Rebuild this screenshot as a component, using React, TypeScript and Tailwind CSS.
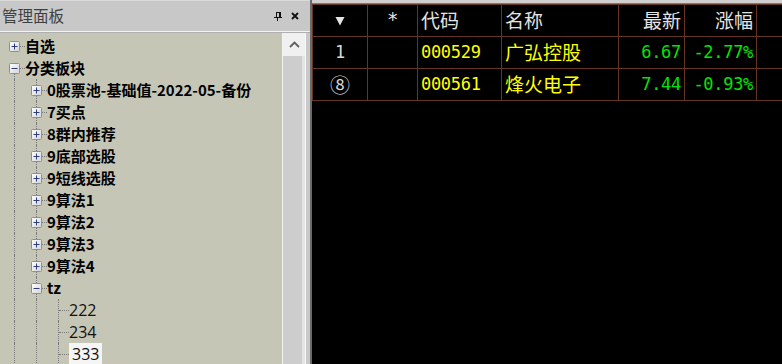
import React from "react";

type Row = { lvl: number; t: string; box?: "+" | "-"; sel?: boolean };

const rows: Row[] = [
  { lvl: 0, t: "自选", box: "+" },
  { lvl: 0, t: "分类板块", box: "-" },
  { lvl: 1, t: "0股票池-基础值-2022-05-备份", box: "+" },
  { lvl: 1, t: "7买点", box: "+" },
  { lvl: 1, t: "8群内推荐", box: "+" },
  { lvl: 1, t: "9底部选股", box: "+" },
  { lvl: 1, t: "9短线选股", box: "+" },
  { lvl: 1, t: "9算法1", box: "+" },
  { lvl: 1, t: "9算法2", box: "+" },
  { lvl: 1, t: "9算法3", box: "+" },
  { lvl: 1, t: "9算法4", box: "+" },
  { lvl: 1, t: "tz", box: "-" },
  { lvl: 2, t: "222" },
  { lvl: 2, t: "234" },
  { lvl: 2, t: "333", sel: true },
];

const CJK = { fontFamily: '"Noto Sans CJK SC", "Noto Sans", sans-serif' };
const MONO = { fontFamily: '"DejaVu Sans Mono", "Liberation Mono", monospace', letterSpacing: "-0.3px" };

function Box({ sign }: { sign: "+" | "-" }) {
  return (
    <svg width="11" height="11" viewBox="0 0 11 11" className="absolute left-[6px] top-[6px]">
      <defs>
        <linearGradient id="bx" x1="0" y1="0" x2="1" y2="1">
          <stop offset="0" stopColor="#ffffff" />
          <stop offset="1" stopColor="#d4d4d4" />
        </linearGradient>
      </defs>
      <rect x="0.5" y="0.5" width="10" height="10" rx="1" fill="url(#bx)" stroke="#8e8f8f" />
      <line x1="2.5" y1="5.5" x2="8.5" y2="5.5" stroke="#2b3d7c" strokeWidth="1" />
      {sign === "+" && <line x1="5.5" y1="2.5" x2="5.5" y2="8.5" stroke="#2b3d7c" strokeWidth="1" />}
    </svg>
  );
}

function VLine({ from = 0 }: { from?: number }) {
  return (
    <div
      className="absolute left-[11px] bottom-0 w-0 border-l border-dotted border-[#7a7a7a]"
      style={{ top: from }}
    />
  );
}

function TreeRow({ r, idx }: { r: Row; idx: number }) {
  const afterCat = idx >= 2;
  const gutters: React.ReactNode[] = [];
  for (let i = 0; i < r.lvl; i++) {
    gutters.push(
      <div key={i} className="relative w-[22px] h-[22px] shrink-0">
        {(i === 0 && afterCat) || i === 1 ? <VLine /> : null}
      </div>
    );
  }
  return (
    <div className="flex h-[22px] items-center pl-[3px]">
      {gutters}
      <div className="relative w-[22px] h-[22px] shrink-0">
        {r.lvl === 0 && r.t === "分类板块" && <VLine from={17} />}
        {r.lvl >= 1 && <VLine />}
        <div className="absolute left-[12px] right-0 top-[11px] h-0 border-t border-dotted border-[#7a7a7a]" />
        {r.box && <Box sign={r.box} />}
      </div>
      {r.lvl < 2 ? (
        <span className="text-[15px] font-bold leading-[22px] text-black whitespace-nowrap" style={CJK}>
          {r.t}
        </span>
      ) : (
        <span
          className={`text-[16px] leading-[22px] text-[#111] whitespace-nowrap ${r.sel ? "bg-[#f5f5f5] px-[3px]" : ""}`}
          style={{ fontFamily: '"Open Sans", "Noto Sans", sans-serif' }}
        >
          {r.t}
        </span>
      )}
    </div>
  );
}

const BR = "border-[#663522]";

function Cell({
  w,
  children,
  align = "left",
  last = false,
}: {
  w: string;
  children?: React.ReactNode;
  align?: "left" | "center" | "right";
  last?: boolean;
}) {
  const a = align === "center" ? "justify-center" : align === "right" ? "justify-end pr-[3px]" : "justify-start pl-[3px]";
  return (
    <div className={`${w} h-full flex items-center ${a} ${last ? "" : `border-r ${BR}`} shrink-0`}>{children}</div>
  );
}

const data = [
  { n: "1", code: "000529", name: "广弘控股", price: "6.67", pct: "-2.77%" },
  { n: "⑧", code: "000561", name: "烽火电子", price: "7.44", pct: "-0.93%" },
];

export default function App() {
  return (
    <div className="flex w-[782px] h-[364px] overflow-hidden bg-black">
      {/* Left panel */}
      <div className="w-[312px] shrink-0 h-full flex flex-col bg-[#c8c8c8] border-r-2 border-[#6a6a6a]">
        <div className="h-[31px] flex items-center justify-between border-t border-[#dadada] shrink-0">
          <span className="pl-[2px] text-[15.5px] text-[#3f3f3f] leading-none" style={CJK}>
            管理面板
          </span>
          <div className="flex items-center gap-[9px] pr-[11px]">
            <svg width="8" height="9" viewBox="0 0 8 9">
              <rect x="2" y="0" width="1" height="5" fill="#111" />
              <rect x="5" y="0" width="2" height="5" fill="#111" />
              <rect x="2" y="0" width="4" height="1" fill="#111" />
              <rect x="0" y="5" width="8" height="1" fill="#111" />
              <rect x="3" y="6" width="1" height="3" fill="#111" />
            </svg>
            <svg width="8" height="8" viewBox="0 0 8 8">
              <path d="M1 1 L7 7 M7 1 L1 7" stroke="#111" strokeWidth="1.8" />
            </svg>
          </div>
        </div>
        <div className="h-px bg-[#f4f4f4] shrink-0" />
        <div className="h-px bg-[#b0b0b0] shrink-0" />
        <div className="flex flex-1 min-h-0">
          <div className="w-[282px] h-full bg-[#c5c6b6] pt-[2px] overflow-hidden shrink-0">
            {rows.map((r, i) => (
              <TreeRow key={i} r={r} idx={i} />
            ))}
          </div>
          <div className="w-[23px] h-full border-l border-[#f4f4f4] flex flex-col shrink-0 bg-[#ececec]">
            <div className="h-[23px] bg-[#f0f0f0] flex items-center justify-center shrink-0">
              <svg width="11" height="7" viewBox="0 0 11 7">
                <path d="M1 6 L5.5 1.5 L10 6" fill="none" stroke="#606060" strokeWidth="1.8" />
              </svg>
            </div>
            <div className="flex flex-1">
              <div className="w-[19px] bg-[#cdcdcd]" />
              <div className="flex-1 bg-[#e4e4e4]" />
            </div>
          </div>
          <div className="w-px h-full bg-[#f8f8f8] shrink-0" />
        </div>
      </div>

      {/* Right table */}
      <div className="flex-1 h-full flex flex-col bg-black">
        <div className="h-[3px] bg-[#d0d0d0] shrink-0" />
        <div className="h-px bg-[#7a7a7a] shrink-0" />
        <div className={`border-t border-l ${BR}`}>
          <div className={`flex h-[32px] border-b ${BR}`}>
            <Cell w="w-[55px]" align="center">
              <svg width="10" height="10" viewBox="0 0 10 10">
                <path d="M0.5 1 L9.5 1 L5 9.5 Z" fill="#e4e4e4" />
              </svg>
            </Cell>
            <Cell w="w-[50px]" align="center">
              <span className="text-[19px] text-[#e4e4e4] mt-[-2px]" style={MONO}>
                *
              </span>
            </Cell>
            <Cell w="w-[84px]">
              <span className="text-[19px] text-[#e4e4e4]" style={CJK}>
                代码
              </span>
            </Cell>
            <Cell w="w-[117px]">
              <span className="text-[19px] text-[#e4e4e4]" style={CJK}>
                名称
              </span>
            </Cell>
            <Cell w="w-[66px]" align="right">
              <span className="text-[19px] text-[#e4e4e4]" style={CJK}>
                最新
              </span>
            </Cell>
            <Cell w="w-[72px]" align="right">
              <span className="text-[19px] text-[#e4e4e4]" style={CJK}>
                涨幅
              </span>
            </Cell>
            <Cell w="flex-1" last />
          </div>
          {data.map((d, i) => (
            <div key={i} className={`flex h-[32px] border-b ${BR}`}>
              <Cell w="w-[55px]" align="center">
                <span className={`${i === 0 ? "text-[17px]" : "text-[20px]"} text-[#d8d8d8]`} style={i === 0 ? MONO : CJK}>
                  {d.n}
                </span>
              </Cell>
              <Cell w="w-[50px]" />
              <Cell w="w-[84px]">
                <span className="text-[17px] text-[#ffff00]" style={MONO}>
                  {d.code}
                </span>
              </Cell>
              <Cell w="w-[117px]">
                <span className="text-[19px] text-[#ffff00]" style={CJK}>
                  {d.name}
                </span>
              </Cell>
              <Cell w="w-[66px]" align="right">
                <span className="text-[17px] text-[#00e600]" style={MONO}>
                  {d.price}
                </span>
              </Cell>
              <Cell w="w-[72px]" align="right">
                <span className="text-[17px] text-[#00e600]" style={MONO}>
                  {d.pct}
                </span>
              </Cell>
              <Cell w="flex-1" last />
            </div>
          ))}
        </div>
      </div>
    </div>
  );
}
